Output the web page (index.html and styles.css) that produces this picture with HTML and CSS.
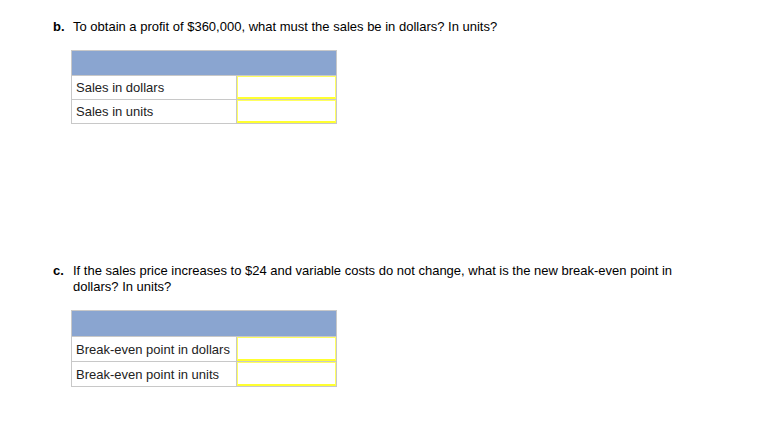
FILE: index.html
```html
<!DOCTYPE html>
<html>
<head>
<meta charset="utf-8">
<link rel="stylesheet" href="styles.css">
</head>
<body>
<div class="page">
  <section class="part part-b">
    <div class="question">
      <span class="letter">b.</span>
      <span class="qtext">To obtain a profit of $360,000, what must the sales be in dollars? In units?</span>
    </div>
    <table class="grid">
      <tr class="head"><td colspan="2"></td></tr>
      <tr><td class="label">Sales in dollars</td><td class="input"><div class="box"></div></td></tr>
      <tr><td class="label">Sales in units</td><td class="input"><div class="box"></div></td></tr>
    </table>
  </section>
  <section class="part part-c">
    <div class="question">
      <span class="letter">c.</span>
      <span class="qtext">If the sales price increases to $24 and variable costs do not change, what is the new break-even point in dollars? In units?</span>
    </div>
    <table class="grid grid-tall">
      <tr class="head"><td colspan="2"></td></tr>
      <tr><td class="label">Break-even point in dollars</td><td class="input"><div class="box"></div></td></tr>
      <tr><td class="label">Break-even point in units</td><td class="input"><div class="box"></div></td></tr>
    </table>
  </section>
</div>
</body>
</html>
```

FILE: styles.css
```css
html, body {
  margin: 0;
  padding: 0;
  background: #fff;
}
body {
  font-family: "Liberation Sans", Arial, sans-serif;
  font-size: 13px;
  color: #000;
}
.page {
  padding: 19px 0 0 53px;
}
.question {
  display: flex;
  line-height: 16px;
}
.letter {
  font-weight: bold;
  width: 20px;
  flex: none;
}
.qtext {
  width: 610px;
}
.grid {
  border-collapse: collapse;
  margin: 15px 0 0 18px;
  width: 266px;
}
.grid td {
  border: 1px solid #c8c8c8;
  padding: 0;
}
.grid .head td {
  background: #8aa5d0;
  height: 24px;
}
.grid .label {
  width: 160px;
  padding-left: 4px;
  color: #222;
  white-space: nowrap;
}
.grid .input {
  width: 99px;
  padding: 0;
}
.box {
  height: 20px;
  border: 1px solid #ffff60;
  border-bottom: 2px solid #ffff30;
}
.grid-tall .head td {
  height: 25px;
}
.grid-tall .box {
  height: 21px;
}
.part-c {
  margin-top: 139px;
}
```
